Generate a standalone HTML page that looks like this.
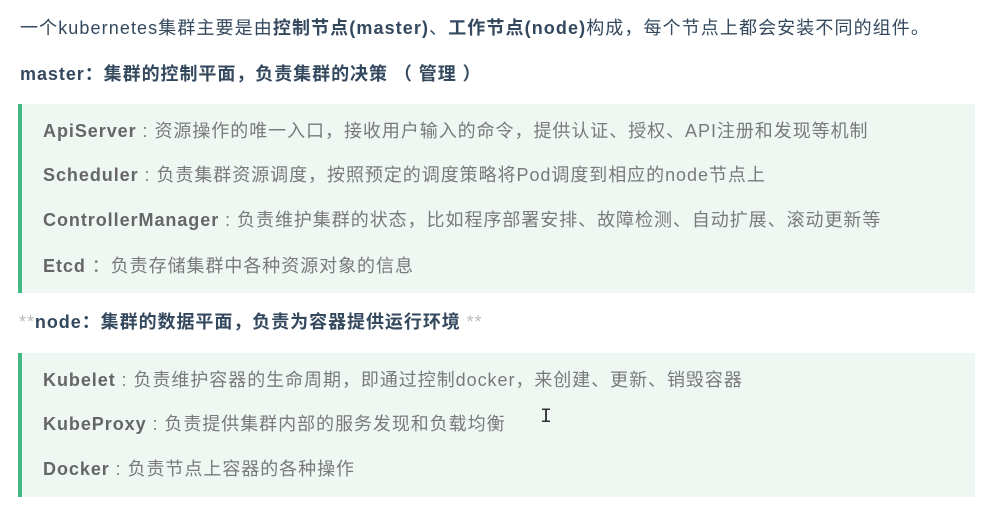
<!DOCTYPE html>
<html><head><meta charset="utf-8"><style>
body{margin:0;width:985px;height:508px;background:#fff;position:relative;overflow:hidden;font-family:"Liberation Sans","Noto Sans CJK SC",sans-serif;font-size:18px;letter-spacing:0.95px;color:#34495e}
.l{position:absolute;left:20px;white-space:nowrap;line-height:22px}
.q{position:absolute;left:18px;width:957px;background:#eef7f2;border-left:4px solid #42b983;box-sizing:border-box}
.q .l{left:21px;color:#7a7a7a}
.q b{color:#666}
b{font-weight:bold}
.s{color:#bbb;font-weight:normal}
</style></head><body>
<div class="l" style="top:17px;letter-spacing:1.1px">一个kubernetes集群主要是由<b>控制节点(master)</b>、<b>工作节点(node)</b>构成，每个节点上都会安装不同的组件。</div>
<div class="l" style="top:63px"><b>master：集群的控制平面，负责集群的决策 （ 管理 ）</b></div>
<div class="q" style="top:104px;height:189px">
<div class="l" style="top:16px"><b>ApiServer</b> : 资源操作的唯一入口，接收用户输入的命令，提供认证、授权、API注册和发现等机制</div>
<div class="l" style="top:60px"><b>Scheduler</b> : 负责集群资源调度，按照预定的调度策略将Pod调度到相应的node节点上</div>
<div class="l" style="top:105px"><b>ControllerManager</b> : 负责维护集群的状态，比如程序部署安排、故障检测、自动扩展、滚动更新等</div>
<div class="l" style="top:151px"><b>Etcd</b> ：负责存储集群中各种资源对象的信息</div>
</div>
<div class="l" style="top:311px;left:19px"><span class="s">**</span><b>node：集群的数据平面，负责为容器提供运行环境</b> <span class="s">**</span></div>
<div class="q" style="top:353px;height:144px">
<div class="l" style="top:16px"><b>Kubelet</b> : 负责维护容器的生命周期，即通过控制docker，来创建、更新、销毁容器</div>
<div class="l" style="top:60px"><b>KubeProxy</b> : 负责提供集群内部的服务发现和负载均衡</div>
<div class="l" style="top:105px"><b>Docker</b> : 负责节点上容器的各种操作</div>
</div>
<div style="position:absolute;left:540px;top:406px;font-size:20px;color:#333;font-family:'Liberation Mono',monospace;letter-spacing:0">I</div>
</body></html>
